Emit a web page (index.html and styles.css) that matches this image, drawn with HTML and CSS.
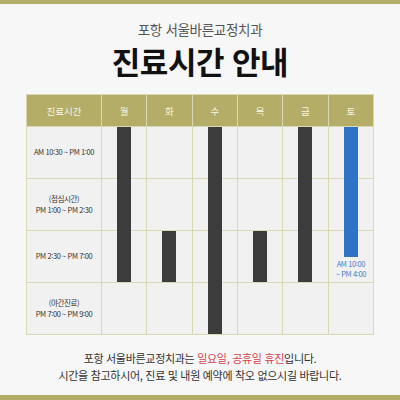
FILE: index.html
```html
<!DOCTYPE html>
<html lang="ko">
<head>
    <meta charset="UTF-8">
    <meta name="viewport" content="width=device-width, initial-scale=1.0">
    <title>진료시간 안내</title>
    <link rel="stylesheet" href="styles.css">
</head>
<body>
    <div class="page">
        <div class="band"></div>
        <p class="clinic">포항 서울바른교정치과</p>
        <h1 class="title">진료시간 안내</h1>

        <div class="schedule">
            <div class="cells">
                <div class="head">진료시간</div>
                <div class="head">월</div>
                <div class="head">화</div>
                <div class="head">수</div>
                <div class="head">목</div>
                <div class="head">금</div>
                <div class="head">토</div>

                <div class="time">AM 10:30 ~ PM 1:00</div>
                <div class="cell"></div><div class="cell"></div><div class="cell"></div>
                <div class="cell"></div><div class="cell"></div><div class="cell"></div>

                <div class="time">(점심시간)<br>PM 1:00 ~ PM 2:30</div>
                <div class="cell"></div><div class="cell"></div><div class="cell"></div>
                <div class="cell"></div><div class="cell"></div><div class="cell"></div>

                <div class="time">PM 2:30 ~ PM 7:00</div>
                <div class="cell"></div><div class="cell"></div><div class="cell"></div>
                <div class="cell"></div><div class="cell"></div><div class="cell"></div>

                <div class="time">(야간진료)<br>PM 7:00 ~ PM 9:00</div>
                <div class="cell"></div><div class="cell"></div><div class="cell"></div>
                <div class="cell"></div><div class="cell"></div><div class="cell"></div>
            </div>

            <div class="bars">
                <div class="bar mon"></div>
                <div class="bar tue"></div>
                <div class="bar wed"></div>
                <div class="bar thu"></div>
                <div class="bar fri"></div>
                <div class="sat">
                    <div class="sat-bar"></div>
                    <div class="sat-label">AM 10:00<br>~ PM 4:00</div>
                </div>
            </div>
        </div>

        <p class="notice">
            포항 서울바른교정치과는 <span class="off">일요일, 공휴일 휴진</span>입니다.<br>
            시간을 참고하시어, 진료 및 내원 예약에 착오 없으시길 바랍니다.
        </p>
        <div class="band bottom"></div>
    </div>
</body>
</html>
```

FILE: styles.css
```css
* {
    margin: 0;
    padding: 0;
    box-sizing: border-box;
}

body {
    font-family: 'Noto Sans CJK KR', 'Noto Sans', sans-serif;
    background: #f7f7f7;
    color: #333;
}

.page {
    width: 400px;
    height: 400px;
    display: flex;
    flex-direction: column;
    align-items: center;
}

.band {
    width: 100%;
    height: 4px;
    background: #b3ae67;
}

.band.bottom {
    height: 5px;
    margin-top: auto;
}

.clinic {
    margin-top: 16px;
    font-size: 13.5px;
    line-height: 18px;
    color: #555;
    letter-spacing: -0.3px;
}

.title {
    margin-top: 3px;
    font-size: 31px;
    line-height: 40px;
    font-weight: 700;
    color: #111;
    letter-spacing: -0.5px;
}

.schedule {
    margin-top: 13px;
    width: 348px;
    display: grid;
}

.cells,
.bars {
    grid-area: 1 / 1;
    display: grid;
    grid-template-columns: 74px repeat(6, 1fr);
    grid-template-rows: 31px repeat(4, 51px);
    gap: 1px;
    padding: 1px;
}

.cells {
    background: #dad8b3;
}

.head {
    background: #b3ad68;
    color: #f7f5e2;
    font-size: 9.5px;
    display: flex;
    align-items: center;
    justify-content: center;
}

.cell,
.time {
    background: #f1f1f1;
}

.time {
    display: flex;
    align-items: center;
    justify-content: center;
    text-align: center;
    font-size: 7.5px;
    line-height: 10.5px;
    letter-spacing: -0.4px;
    color: #333;
}

.bar {
    width: 14px;
    justify-self: center;
    background: #3c3c3c;
}

.mon { grid-column: 2; grid-row: 2 / 5; }
.tue { grid-column: 3; grid-row: 4 / 5; }
.wed { grid-column: 4; grid-row: 2 / 6; }
.thu { grid-column: 5; grid-row: 4 / 5; }
.fri { grid-column: 6; grid-row: 2 / 5; }

.sat {
    grid-column: 7;
    grid-row: 2 / 5;
    display: flex;
    flex-direction: column;
    align-items: center;
}

.sat-bar {
    flex: 1;
    width: 14px;
    background: #2f73c6;
}

.sat-label {
    padding: 2px 0 3px;
    font-size: 7.5px;
    line-height: 10px;
    letter-spacing: -0.4px;
    text-align: center;
    color: #4a7cc4;
}

.notice {
    margin-top: 15px;
    font-size: 11px;
    line-height: 17px;
    text-align: center;
    letter-spacing: -0.3px;
    color: #333;
}

.off {
    color: #d8404f;
}
```
